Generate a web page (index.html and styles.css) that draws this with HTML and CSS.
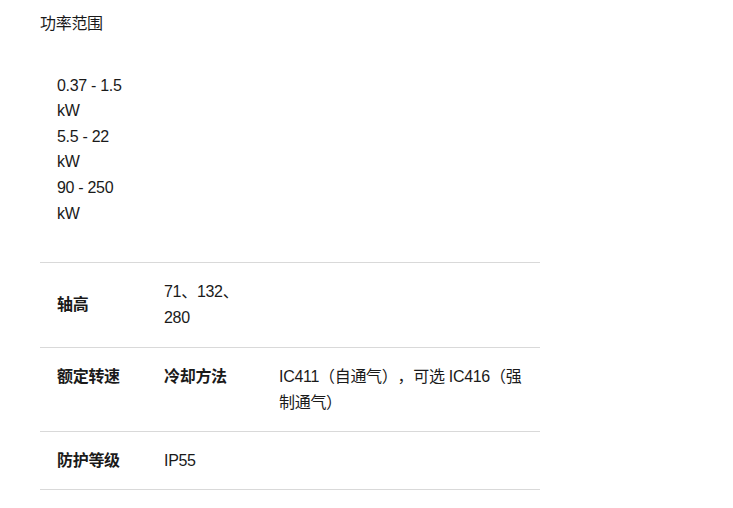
FILE: index.html
```html
<!DOCTYPE html>
<html lang="zh">
<head>
<meta charset="utf-8">
<link rel="stylesheet" href="styles.css">
</head>
<body>
<div class="spec">
  <div class="spec-title">功率范围</div>
  <div class="range-cell">
    <div class="range-line">0.37 - 1.5 kW</div>
    <div class="range-line">5.5 - 22 kW</div>
    <div class="range-line">90 - 250 kW</div>
  </div>
  <table class="spec-table">
    <colgroup>
      <col class="c1"><col class="c2"><col class="c3">
    </colgroup>
    <tr class="row-tall">
      <th class="label mid">轴高</th>
      <td>71、132、280</td>
      <td></td>
    </tr>
    <tr class="row-short">
      <th class="label">额定转速</th>
      <th class="label">冷却方法</th>
      <td>IC411（自通气），可选 IC416（强制通气）</td>
    </tr>
    <tr>
      <th class="label">防护等级</th>
      <td>IP55</td>
      <td></td>
    </tr>
  </table>
</div>
</body>
</html>
```
FILE: styles.css
```css
html, body {
  margin: 0;
  padding: 0;
  background: #fff;
}
body {
  font-family: "Liberation Sans", "Noto Sans CJK SC", sans-serif;
  font-size: 16px;
  line-height: 25.6px;
  color: #1a1a1a;
  letter-spacing: -0.3px;
  text-spacing-trim: space-all;
}
.spec {
  padding: 11px 0 0 40px;
  width: 500px;
}
.spec-title {
  margin-bottom: 20px;
}
.range-cell {
  width: 75px;
  padding: 16px 16px 36px 17px;
}
.spec-table {
  width: 500px;
  border-collapse: collapse;
  table-layout: fixed;
}
.c1 { width: 107px; }
.c2 { width: 115px; }
.c3 { width: 278px; }
.spec-table tr {
  border-top: 1px solid #d9d9d9;
  border-bottom: 1px solid #d9d9d9;
}
.spec-table th,
.spec-table td {
  padding: 16px 16px 16px 17px;
  text-align: left;
  vertical-align: top;
  font-weight: normal;
}
.spec-table .row-tall th,
.spec-table .row-tall td {
  padding-bottom: 17px;
}
.spec-table .row-short th,
.spec-table .row-short td {
  padding-bottom: 15px;
}
.spec-table th.label {
  font-weight: bold;
}
.spec-table .mid {
  vertical-align: middle;
}
```
